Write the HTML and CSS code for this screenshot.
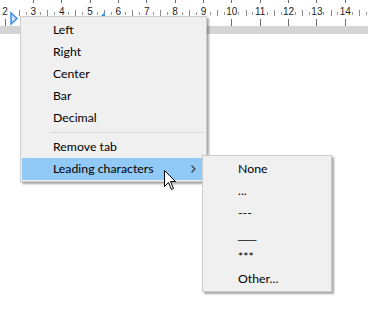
FILE: index.html
```html
<!DOCTYPE html>
<html lang="en">
<head>
  <meta charset="UTF-8">
  <title>Tab menu</title>
  <link rel="stylesheet" href="styles.css">
</head>
<body>

  <div id="ruler">
    <svg width="368" height="26" viewBox="0 0 368 26">
      <g class="ticks-long">
        <line x1="5.5" y1="19" x2="5.5" y2="26"/><line x1="33.5" y1="0" x2="33.5" y2="3"/><line x1="61.5" y1="0" x2="61.5" y2="3"/>
        <line x1="90.5" y1="0" x2="90.5" y2="3"/><line x1="118.5" y1="0" x2="118.5" y2="3"/><line x1="146.5" y1="0" x2="146.5" y2="3"/>
        <line x1="175.5" y1="0" x2="175.5" y2="3"/><line x1="203.5" y1="0" x2="203.5" y2="3"/><line x1="231.5" y1="0" x2="231.5" y2="3"/>
        <line x1="260.5" y1="0" x2="260.5" y2="3"/><line x1="288.5" y1="0" x2="288.5" y2="3"/><line x1="316.5" y1="0" x2="316.5" y2="3"/>
        <line x1="345.5" y1="0" x2="345.5" y2="3"/>
        <line x1="203.5" y1="19" x2="203.5" y2="26"/><line x1="231.5" y1="19" x2="231.5" y2="26"/><line x1="260.5" y1="19" x2="260.5" y2="26"/>
        <line x1="288.5" y1="19" x2="288.5" y2="26"/><line x1="316.5" y1="19" x2="316.5" y2="26"/><line x1="345.5" y1="19" x2="345.5" y2="26"/>
      </g>
      <g class="ticks-half">
        <line x1="19.5" y1="10" x2="19.5" y2="16"/><line x1="47.5" y1="10" x2="47.5" y2="16"/><line x1="75.5" y1="10" x2="75.5" y2="16"/>
        <line x1="104.5" y1="10" x2="104.5" y2="16"/><line x1="132.5" y1="10" x2="132.5" y2="16"/><line x1="160.5" y1="10" x2="160.5" y2="16"/>
        <line x1="189.5" y1="10" x2="189.5" y2="16"/><line x1="217.5" y1="10" x2="217.5" y2="16"/><line x1="246.5" y1="10" x2="246.5" y2="16"/>
        <line x1="274.5" y1="10" x2="274.5" y2="16"/><line x1="302.5" y1="10" x2="302.5" y2="16"/><line x1="331.5" y1="10" x2="331.5" y2="16"/>
        <line x1="359.5" y1="10" x2="359.5" y2="16"/>
      </g>
      <g class="ticks-quarter">
        <line x1="26.5" y1="12" x2="26.5" y2="15"/><line x1="40.5" y1="12" x2="40.5" y2="15"/><line x1="54.5" y1="12" x2="54.5" y2="15"/>
        <line x1="68.5" y1="12" x2="68.5" y2="15"/><line x1="82.5" y1="12" x2="82.5" y2="15"/><line x1="97.5" y1="12" x2="97.5" y2="15"/>
        <line x1="111.5" y1="12" x2="111.5" y2="15"/><line x1="125.5" y1="12" x2="125.5" y2="15"/><line x1="139.5" y1="12" x2="139.5" y2="15"/>
        <line x1="153.5" y1="12" x2="153.5" y2="15"/><line x1="167.5" y1="12" x2="167.5" y2="15"/><line x1="182.5" y1="12" x2="182.5" y2="15"/>
        <line x1="196.5" y1="12" x2="196.5" y2="15"/><line x1="210.5" y1="12" x2="210.5" y2="15"/><line x1="224.5" y1="12" x2="224.5" y2="15"/>
        <line x1="238.5" y1="12" x2="238.5" y2="15"/><line x1="252.5" y1="12" x2="252.5" y2="15"/><line x1="267.5" y1="12" x2="267.5" y2="15"/>
        <line x1="281.5" y1="12" x2="281.5" y2="15"/><line x1="295.5" y1="12" x2="295.5" y2="15"/><line x1="309.5" y1="12" x2="309.5" y2="15"/>
        <line x1="323.5" y1="12" x2="323.5" y2="15"/><line x1="337.5" y1="12" x2="337.5" y2="15"/><line x1="352.5" y1="12" x2="352.5" y2="15"/>
        <line x1="366.5" y1="12" x2="366.5" y2="15"/>
      </g>
      <g class="nums">
        <text x="5" y="15">2</text><text x="33.4" y="15">3</text><text x="61.7" y="15">4</text>
        <text x="90" y="15">5</text><text x="118.4" y="15">6</text><text x="146.8" y="15">7</text>
        <text x="175.1" y="15">8</text><text x="203.5" y="15">9</text><text x="231.8" y="15">10</text>
        <text x="260.2" y="15">11</text><text x="288.5" y="15">12</text><text x="316.9" y="15">13</text>
        <text x="345.2" y="15">14</text>
      </g>
      <!-- indent marker and tab stop -->
      <polygon class="marker" points="11,13 11,24 17,18.5"/>
      <polygon class="tabstop" points="105,12 105,17 100,17"/>
    </svg>
  </div>
  <div id="band"></div>

  <div class="menu main-menu">
    <div class="item">Left</div>
    <div class="item">Right</div>
    <div class="item">Center</div>
    <div class="item">Bar</div>
    <div class="item">Decimal</div>
    <div class="sep"></div>
    <div class="item">Remove tab</div>
    <div class="item hot">
      <span>Leading characters</span>
      <svg class="chev" width="5" height="8" viewBox="0 0 5 8"><polyline points="0.5,0.5 4,4 0.5,7.5"/></svg>
    </div>
  </div>

  <div class="menu sub-menu">
    <div class="item">None</div>
    <div class="item">...</div>
    <div class="item">---</div>
    <div class="item under">___</div>
    <div class="item">***</div>
    <div class="item">Other...</div>
  </div>

  <svg class="cursor" width="13" height="21" viewBox="0 0 13 21">
    <path d="M0.5,0.5 L0.5,16.5 L4.5,12.5 L7.5,19.5 L9.5,18.5 L6.5,11.5 L11.5,11.5 Z"/>
  </svg>

</body>
</html>
```

FILE: styles.css
```css
body, html { margin: 0; height: 100%; overflow: hidden; background: #fff; }
#ruler { height: 26px; }
#ruler svg { display: block; }
#ruler .ticks-long line { stroke: #6d6d6d; stroke-width: 1; }
#ruler .ticks-half line { stroke: #8a8a8a; stroke-width: 1; }
#ruler .ticks-quarter line { stroke: #9a9a9a; stroke-width: 1; }
#ruler .nums text {
  font-family: "Liberation Sans", Arial, sans-serif;
  font-size: 10px;
  fill: #1e1e1e;
  text-anchor: middle;
}
#ruler .marker { fill: #cfe3fa; stroke: #3b8de6; stroke-width: 1.5; }
#ruler .tabstop { fill: #3b8de6; }
#band { height: 8px; background: #d4d4d4; }

.menu {
  position: absolute;
  box-sizing: border-box;
  background: #f0f0f0;
  border: 1px solid #cccccc;
  padding: 2px 4px 1px 1px;
  box-shadow: 2px 2px 2px rgba(0,0,0,0.35);
  font-family: Lato, "Noto Sans", sans-serif;
  font-size: 12.3px;
  color: #000;
}
.main-menu { left: 20px; top: 16px; width: 187px; }
.sub-menu { left: 202px; top: 155px; width: 130px; }
.item {
  height: 22px;
  line-height: 22px;
  padding-left: 31px;
  display: flex;
  align-items: center;
  justify-content: space-between;
}
.sub-menu .item { padding-left: 34px; }
.sub-menu .item.under { font-family: "Liberation Sans", Arial, sans-serif; font-size: 11px; }
.item.hot { background: #91c9f7; padding-right: 6px; }
.chev polyline { fill: none; stroke: #333; stroke-width: 1.1; }
.sep { height: 1px; background: #d7d7d7; margin: 3px -2px 3px 28px; }
.cursor { position: absolute; left: 164px; top: 170px; }
.cursor path { fill: #fff; stroke: #000; stroke-width: 1; stroke-linejoin: miter; }
```
